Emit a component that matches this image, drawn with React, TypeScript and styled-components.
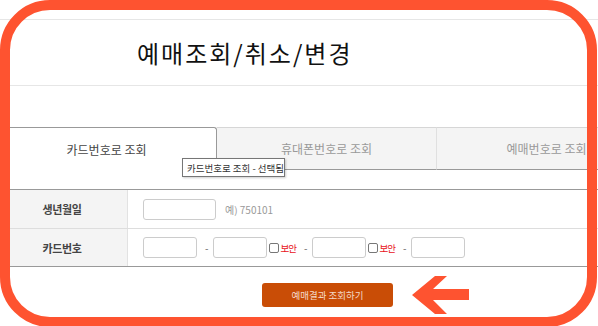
import styled, { createGlobalStyle } from 'styled-components';

const GlobalStyle = createGlobalStyle`
  body {
    margin: 0;
    background: #fff;
    font-family: 'Noto Sans CJK KR', 'Noto Sans', sans-serif;
    overflow: hidden;
  }
`;

const tabs = ['카드번호로 조회', '휴대폰번호로 조회', '예매번호로 조회'];

const App = () => {
  return (
    <>
      <GlobalStyle />
      <Page>
        <TopBar />
        <TitleBar>
          <Title>예매조회/취소/변경</Title>
        </TitleBar>
        <Content>
          <TabList>
            {tabs.map((label, i) => (
              <Tab key={label} $active={i === 0}>
                {label}
              </Tab>
            ))}
            <Tooltip>카드번호로 조회 - 선택됨</Tooltip>
          </TabList>

          <Table>
            <Row>
              <Label>생년월일</Label>
              <Cell>
                <Field $w={73} />
                <Hint>예) 750101</Hint>
              </Cell>
            </Row>
            <Row $last>
              <Label>카드번호</Label>
              <Cell>
                <Field $w={54} />
                <Dash>-</Dash>
                <Field $w={54} />
                <Check type="checkbox" />
                <Secure>보안</Secure>
                <Dash>-</Dash>
                <Field $w={54} />
                <Check type="checkbox" />
                <Secure>보안</Secure>
                <Dash>-</Dash>
                <Field $w={54} />
              </Cell>
            </Row>
          </Table>

          <ButtonRow>
            <SearchButton>예매결과 조회하기</SearchButton>
            <Arrow width="57" height="38" viewBox="0 0 57 38">
              <polygon points="0,19 23,0 35,0 21,13 57,13 57,24 21,24 35,38 23,38" fill="#fe5330" />
            </Arrow>
          </ButtonRow>
        </Content>
        <Frame />
      </Page>
    </>
  );
};

export default App;

const Page = styled.div`
  position: relative;
  width: 598px;
  height: 326px;
  overflow: hidden;
`;

const TopBar = styled.div`
  height: 19px;
  border-bottom: 1px solid #e6e6e6;
`;

const TitleBar = styled.div`
  height: 65px;
  padding-left: 137px;
  display: flex;
  align-items: center;
  border-bottom: 1px solid #e6e6e6;
`;

const Title = styled.h2`
  margin: 0;
  font-size: 24px;
  font-weight: 400;
  color: #111;
  line-height: 1;
  letter-spacing: 2px;
`;

const Content = styled.div`
  width: 660px;
  margin-left: -3px;
  padding-top: 41px;
`;

const TabList = styled.div`
  position: relative;
  display: flex;
  height: 43px;
`;

const Tab = styled.div<{ $active: boolean }>`
  width: 220px;
  box-sizing: border-box;
  display: flex;
  align-items: center;
  justify-content: center;
  font-size: 12px;
  color: ${(p) => (p.$active ? '#444' : '#999')};
  background: ${(p) => (p.$active ? '#fff' : '#f4f4f4')};
  border-top: 1px solid ${(p) => (p.$active ? '#999' : '#d6d6d6')};
  border-right: 1px solid ${(p) => (p.$active ? '#999' : '#e0e0e0')};
  border-bottom: ${(p) => (p.$active ? 'none' : '1px solid #999')};
  border-top-right-radius: ${(p) => (p.$active ? '3px' : '0')};
`;

const Tooltip = styled.div`
  position: absolute;
  left: 185px;
  top: 31px;
  width: 103px;
  height: 19px;
  box-sizing: border-box;
  padding: 0 4px;
  display: flex;
  align-items: center;
  background: #fff;
  border: 1px solid #767676;
  box-shadow: 1px 1px 2px rgba(0, 0, 0, 0.2);
  font-size: 9.5px;
  color: #333;
  white-space: nowrap;
`;

const Table = styled.div`
  margin-top: 19px;
  border-top: 1px solid #999;
  border-bottom: 1px solid #999;
`;

const Row = styled.div<{ $last?: boolean }>`
  display: grid;
  grid-template-columns: 131px 1fr;
  height: ${(p) => (p.$last ? '37px' : '38px')};
  border-bottom: ${(p) => (p.$last ? 'none' : '1px solid #ddd')};
`;

const Label = styled.div`
  display: flex;
  align-items: center;
  justify-content: center;
  background: #f4f4f4;
  border-right: 1px solid #e2e2e2;
  font-size: 11px;
  font-weight: 700;
  color: #444;
  letter-spacing: -0.4px;
`;

const Cell = styled.div`
  display: flex;
  align-items: center;
  padding-left: 15px;
`;

const Field = styled.input<{ $w: number }>`
  width: ${(p) => p.$w}px;
  height: 21px;
  box-sizing: border-box;
  margin: 0;
  border: 1px solid #ccc;
  border-radius: 3px;
  background: #fff;
`;

const Hint = styled.span`
  margin-left: 9px;
  font-size: 10px;
  color: #999;
`;

const Dash = styled.span`
  margin: 0 5px 0 8px;
  font-size: 10px;
  color: #666;
`;

const Check = styled.input`
  appearance: none;
  width: 10px;
  height: 10px;
  margin: 0 1px 0 2px;
  border: 1px solid #777;
  border-radius: 2px;
  background: #fff;
`;

const Secure = styled.span`
  font-size: 9.5px;
  color: #e8121a;
  letter-spacing: -1px;
`;

const ButtonRow = styled.div`
  display: flex;
  align-items: center;
  padding-left: 265px;
  margin-top: 9px;
  gap: 19px;
`;

const SearchButton = styled.button`
  width: 131px;
  height: 24px;
  border: none;
  border-radius: 3px;
  background: #c94d06;
  color: #f4d9c8;
  font-family: 'Noto Sans CJK KR', 'Noto Sans', sans-serif;
  font-size: 9.5px;
  padding: 0;
`;

const Arrow = styled.svg`
  display: block;
`;

const Frame = styled.div`
  position: absolute;
  left: 0;
  top: 0;
  width: 597px;
  height: 327px;
  box-sizing: border-box;
  border: 10px solid #fe5330;
  border-radius: 50px;
  pointer-events: none;
`;
